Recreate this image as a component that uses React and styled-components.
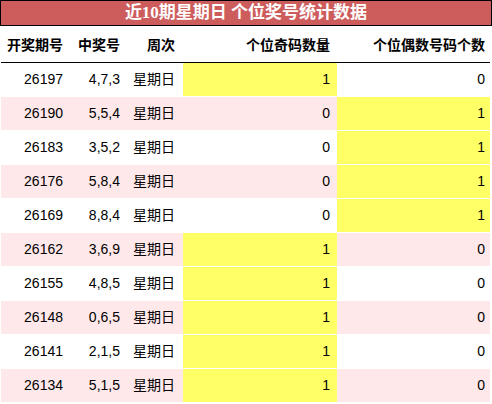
import React from "react";
import styled, { createGlobalStyle } from "styled-components";

//red title: indianred, yellow highlight, pink stripe

const GlobalStyle = createGlobalStyle`
  html, body {
    margin: 0;
    padding: 0;
    background: #fff;
  }
  body {
    font-family: "Liberation Sans", "Noto Sans CJK SC", sans-serif;
    color: #000;
  }
`;

const Wrapper = styled.div`
  width: 492px;
`;

const Title = styled.div`
  height: 24px;
  line-height: 24px;
  border: 1px solid #000;
  background: #cd5c5c;
  color: #fff;
  text-align: center;
  font-family: "Liberation Serif", "Noto Sans CJK SC", serif;
  font-weight: bold;
  font-size: 17px;
`;

const Grid = styled.div`
  display: grid;
  grid-template-columns: 69px 57px 56px 154px 153px;
  padding: 0 1px;
`;

const HeadCell = styled.div`
  height: 36px;
  line-height: 36px;
  border-bottom: 1px solid #000;
  text-align: right;
  padding-right: ${p => p.pad || 7}px;
  font-weight: bold;
  font-size: 14px;
  font-family: "Noto Sans CJK SC", sans-serif;
  white-space: nowrap;
`;

const Cell = styled.div`
  height: 33px;
  line-height: 33px;
  border-bottom: 1px solid #fff;
  text-align: right;
  padding-right: ${p => p.pad || 7}px;
  font-size: 14px;
  background: ${p => (p.hot ? "#ffff66" : p.stripe ? "#ffe8ea" : "#fff")};
  white-space: nowrap;
`;

const rows = [
  ["26197", "4,7,3", 1, 0],
  ["26190", "5,5,4", 0, 1],
  ["26183", "3,5,2", 0, 1],
  ["26176", "5,8,4", 0, 1],
  ["26169", "8,8,4", 0, 1],
  ["26162", "3,6,9", 1, 0],
  ["26155", "4,8,5", 1, 0],
  ["26148", "0,6,5", 1, 0],
  ["26141", "2,1,5", 1, 0],
  ["26134", "5,1,5", 1, 0],
];

export default function App() {
  return (
    <Wrapper>
      <GlobalStyle />
      <Title>近10期星期日 个位奖号统计数据</Title>
      <Grid>
        <HeadCell>开奖期号</HeadCell>
        <HeadCell>中奖号</HeadCell>
        <HeadCell pad={8}>周次</HeadCell>
        <HeadCell>个位奇码数量</HeadCell>
        <HeadCell pad={5}>个位偶数号码个数</HeadCell>
        {rows.map((r, i) => {
          const stripe = i % 2 === 1;
          return (
            <React.Fragment key={r[0]}>
              <Cell stripe={stripe}>{r[0]}</Cell>
              <Cell stripe={stripe}>{r[1]}</Cell>
              <Cell stripe={stripe} pad={8}>星期日</Cell>
              <Cell stripe={stripe} hot={r[2] > 0}>{r[2]}</Cell>
              <Cell stripe={stripe} hot={r[3] > 0} pad={5}>{r[3]}</Cell>
            </React.Fragment>
          );
        })}
      </Grid>
    </Wrapper>
  );
}
